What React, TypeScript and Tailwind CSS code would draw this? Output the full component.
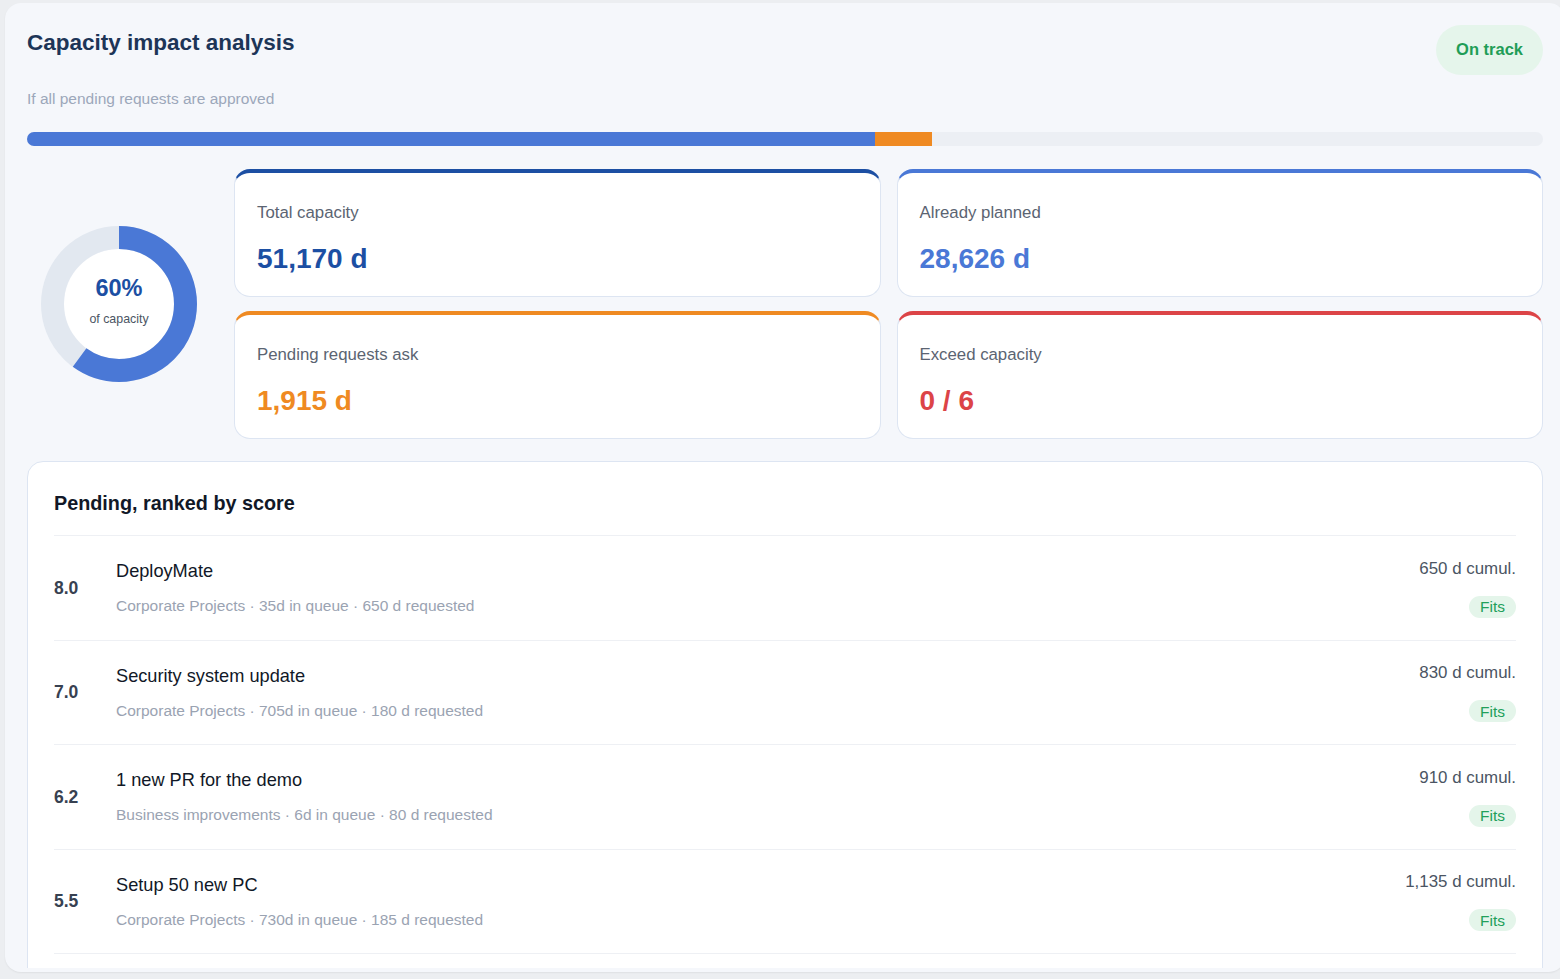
// Capacity impact analysis panel
const stats = [
  { label: "Total capacity", value: "51,170 d", border: "border-t-[#1c4fa3]", text: "text-[#1c4fa3]" },
  { label: "Already planned", value: "28,626 d", border: "border-t-[#4a78d6]", text: "text-[#4a78d6]" },
  { label: "Pending requests ask", value: "1,915 d", border: "border-t-[#ef8a22]", text: "text-[#ef8a22]" },
  { label: "Exceed capacity", value: "0 / 6", border: "border-t-[#dc4447]", text: "text-[#dc4447]" },
];

const pending = [
  { score: "8.0", title: "DeployMate", meta: "Corporate Projects · 35d in queue · 650 d requested", cumul: "650 d cumul." },
  { score: "7.0", title: "Security system update", meta: "Corporate Projects · 705d in queue · 180 d requested", cumul: "830 d cumul." },
  { score: "6.2", title: "1 new PR for the demo", meta: "Business improvements · 6d in queue · 80 d requested", cumul: "910 d cumul." },
  { score: "5.5", title: "Setup 50 new PC", meta: "Corporate Projects · 730d in queue · 185 d requested", cumul: "1,135 d cumul." },
];

function Donut({ percent }: { percent: number }) {
  const r = 66.5;
  const c = 2 * Math.PI * r;
  return (
    <div className="relative w-[156px] h-[156px]">
      <svg width="156" height="156" viewBox="0 0 156 156">
        <circle cx="78" cy="78" r="55" fill="#ffffff" />
        <circle cx="78" cy="78" r={r} fill="none" stroke="#e2e8f0" strokeWidth="23" />
        <circle
          cx="78"
          cy="78"
          r={r}
          fill="none"
          stroke="#4a78d6"
          strokeWidth="23"
          strokeDasharray={`${(c * percent) / 100} ${c}`}
          transform="rotate(-90 78 78)"
        />
      </svg>
      <div className="absolute inset-0 flex flex-col items-center justify-center">
        <span className="text-[23.5px] leading-[28px] font-bold text-[#1c4fa3] mt-[-8px]">{percent}%</span>
        <span className="text-[12.4px] leading-[16px] text-[#4b5563] mt-[9px]">of capacity</span>
      </div>
    </div>
  );
}

export default function App() {
  return (
    <div className="w-[1560px] h-[979px] overflow-hidden bg-[#eceef1] pt-[3px] pl-[5px]" style={{ fontFamily: '"Liberation Sans", Arial, sans-serif' }}>
      <div className="w-[1560px] h-[969px] rounded-2xl bg-[#f5f7fb] pb-[4px] shadow-[0_1px_2px_rgba(0,0,0,0.06)]">
        <div className="h-full overflow-hidden px-[22px] pt-[22px]">

          {/* Header */}
          <div className="flex items-start justify-between">
            <div>
              <h1 className="mt-[4px] text-[22.5px] leading-[28px] font-bold text-[#1d3557]">Capacity impact analysis</h1>
              <p className="mt-[32px] text-[15.5px] leading-[20px] text-[#9ca7ba]">If all pending requests are approved</p>
            </div>
            <span className="h-[50px] px-[20px] rounded-full bg-[#e5f5eb] text-[#1f9d57] text-[16.5px] font-bold flex items-center pb-[1px]">On track</span>
          </div>

          {/* Progress */}
          <div className="mt-[23px] h-[14px] w-[1516px] rounded-full bg-[#eceff4] overflow-hidden flex">
            <div className="h-full w-[848px] bg-[#4a78d6]" />
            <div className="h-full w-[57px] bg-[#ef8a22]" />
          </div>

          {/* Stats */}
          <div className="mt-[23px] w-[1516px] grid grid-cols-[191px_1fr] gap-x-[16px]">
            <div className="flex items-center pl-[14px]">
              <Donut percent={60} />
            </div>
            <div className="grid grid-cols-2 gap-x-[16px] gap-y-[14px]">
              {stats.map(s => (
                <div key={s.label} className={`h-[128px] rounded-2xl bg-white border border-[#dde5f2] border-t-4 ${s.border} pl-[22px] pt-[28px]`}>
                  <p className="text-[16.8px] leading-[24px] text-[#5b6472]">{s.label}</p>
                  <p className={`mt-[17px] text-[28px] leading-[34px] font-bold ${s.text}`}>{s.value}</p>
                </div>
              ))}
            </div>
          </div>

          {/* Pending list */}
          <div className="mt-[22px] w-[1516px] rounded-2xl bg-white border border-[#dde5f2] px-[26px] pt-[27px] pb-[40px]">
            <h2 className="text-[19.8px] leading-[28px] font-bold text-[#111827]">Pending, ranked by score</h2>
            <div className="mt-[18px] border-b border-[#eef0f4]">
              {pending.map(p => (
                <div key={p.title} className="h-[104.5px] border-t border-[#eef0f4] flex items-center">
                  <span className="w-[62px] text-[17.5px] font-bold text-[#374151]">{p.score}</span>
                  <div className="flex-1">
                    <p className="text-[18.2px] leading-[24px] text-[#111827]">{p.title}</p>
                    <p className="mt-[13px] text-[15.5px] leading-[20px] text-[#9aa3b2]">{p.meta}</p>
                  </div>
                  <div className="flex flex-col items-end">
                    <span className="text-[16.9px] leading-[22px] text-[#4b5563]">{p.cumul}</span>
                    <span className="mt-[16px] h-[22px] px-[11px] rounded-full bg-[#e4f5ea] text-[#22a05a] text-[15.5px] flex items-center">Fits</span>
                  </div>
                </div>
              ))}
            </div>
          </div>
        </div>
      </div>
    </div>
  );
}
